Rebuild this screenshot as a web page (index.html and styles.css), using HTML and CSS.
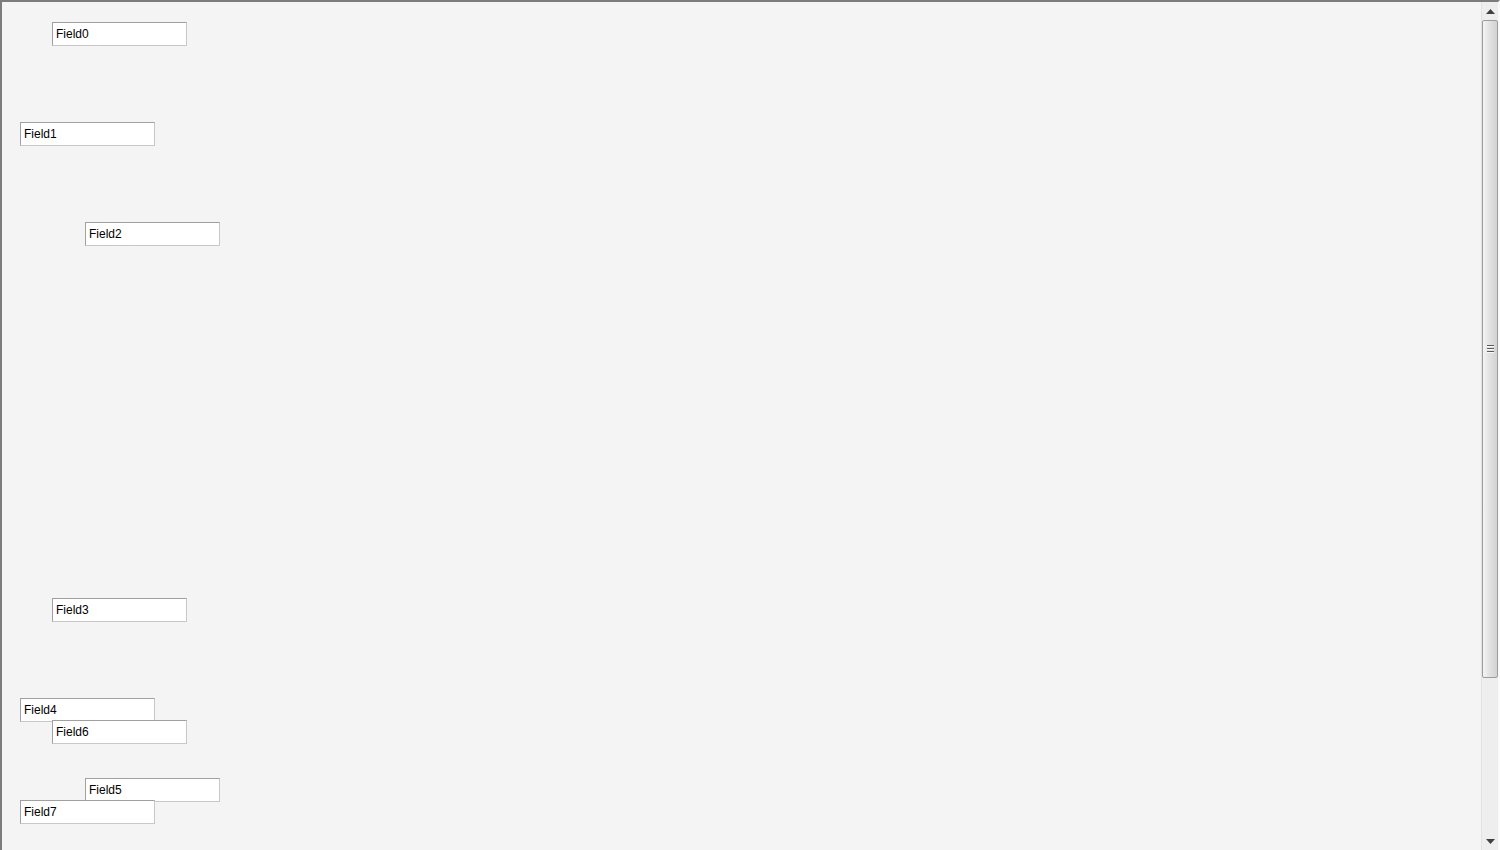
FILE: index.html
```html
<!DOCTYPE html>
<html lang="en">
<head>
<meta charset="UTF-8">
<meta name="viewport" content="width=device-width, initial-scale=1.0">
<title>Form Designer</title>
<link rel="stylesheet" href="styles.css">
</head>
<body>
<div class="frame">
    <div class="canvas">
        <input type="text" class="field f0" value="Field0">
        <input type="text" class="field f1" value="Field1">
        <input type="text" class="field f2" value="Field2">
        <input type="text" class="field f3" value="Field3">
        <input type="text" class="field f4" value="Field4">
        <input type="text" class="field f5" value="Field5">
        <input type="text" class="field f6" value="Field6">
        <input type="text" class="field f7" value="Field7">
    </div>
    <div class="scrollbar">
        <div class="arrow">
            <svg width="9" height="5" viewBox="0 0 9 5"><path d="M4.5 0 L9 5 L0 5 Z" fill="#404040"/></svg>
        </div>
        <div class="track">
            <div class="thumb">
                <div class="grip">
                    <span></span><span></span><span></span>
                </div>
            </div>
        </div>
        <div class="arrow">
            <svg width="9" height="5" viewBox="0 0 9 5"><path d="M0 0 L9 0 L4.5 5 Z" fill="#404040"/></svg>
        </div>
    </div>
</div>
</body>
</html>
```

FILE: styles.css
```css
body {
    margin: 0;
    font-family: "Liberation Sans", Arial, sans-serif;
    background-color: #f4f4f4;
}
.frame {
    width: 1500px;
    height: 850px;
    box-sizing: border-box;
    display: flex;
    border-top: 2px solid #7c7c7c;
    border-left: 2px solid #7c7c7c;
    border-right: 2px solid #fafafa;
    background-color: #f4f4f4;
}
.canvas {
    flex: 1;
    position: relative;
}
.field {
    position: absolute;
    width: 135px;
    height: 24px;
    box-sizing: border-box;
    margin: 0;
    padding: 0 3px;
    border: 1px solid;
    border-color: #a0a0a0 #c8c8c8 #c8c8c8 #a0a0a0;
    background-color: #fff;
    color: #000;
    font-family: "Liberation Sans", Arial, sans-serif;
    font-size: 12px;
    outline: none;
}
/* positions on the design surface */
.f0 { left: 50px; top: 20px; }
.f1 { left: 18px; top: 120px; }
.f2 { left: 83px; top: 220px; }
.f3 { left: 50px; top: 596px; }
.f4 { left: 18px; top: 696px; }
.f5 { left: 83px; top: 776px; }
.f6 { left: 50px; top: 718px; }
.f7 { left: 18px; top: 798px; }

.scrollbar {
    width: 16px;
    display: flex;
    flex-direction: column;
    background-color: #eeeeee;
    border-left: 1px solid #e2e2e2;
}
.arrow {
    height: 18px;
    display: flex;
    align-items: center;
    justify-content: center;
}
.track {
    flex: 1;
    padding: 0 0 0 0;
}
.thumb {
    height: 658px;
    box-sizing: border-box;
    border: 1px solid #9c9c9c;
    border-radius: 2px;
    background: linear-gradient(to right, #f4f4f4, #e4e4e4 40%, #d2d2d2);
    display: flex;
    align-items: center;
    justify-content: center;
}
.grip {
    display: flex;
    flex-direction: column;
    gap: 1px;
}
.grip span {
    display: block;
    width: 7px;
    height: 1px;
    background-color: #5a5a5a;
    border-bottom: 1px solid #fafafa;
}
```
